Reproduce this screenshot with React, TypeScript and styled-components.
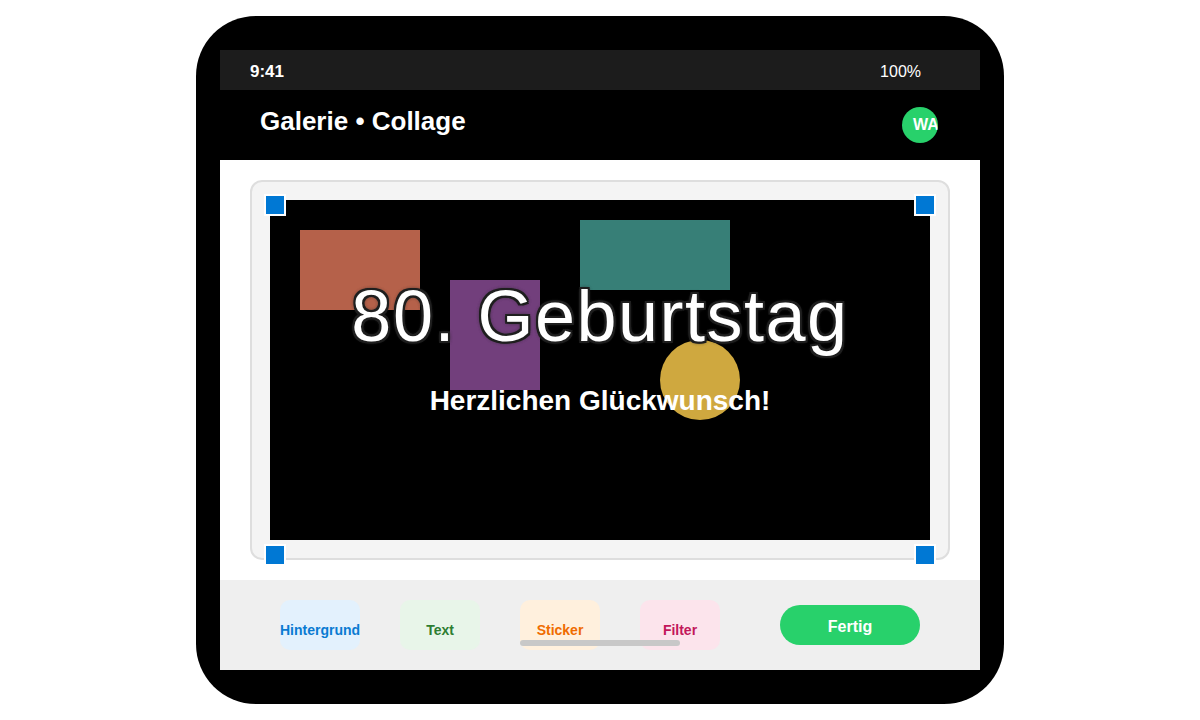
import styled, { createGlobalStyle } from "styled-components";

const GlobalStyle = createGlobalStyle`
  html, body {
    margin: 0;
    padding: 0;
    background: #ffffff;
    font-family: "Liberation Sans", Arial, sans-serif;
  }
`;

const Stage = styled.div`
  width: 1200px;
  height: 720px;
  display: flex;
  align-items: center;
  justify-content: center;
`;

const Phone = styled.div`
  box-sizing: border-box;
  width: 808px;
  height: 688px;
  padding: 34px 24px;
  background: #000;
  border-radius: 60px;
  display: flex;
`;

const Screen = styled.div`
  flex: 1;
  display: flex;
  flex-direction: column;
  overflow: hidden;
`;

const StatusBar = styled.div`
  box-sizing: border-box;
  height: 40px;
  flex-shrink: 0;
  background: #1c1c1c;
  color: #fff;
  display: flex;
  align-items: center;
  justify-content: space-between;
  padding: 4px 59px 0 30px;
`;

const Clock = styled.span`
  font-size: 17px;
  font-weight: 700;
`;

const Battery = styled.span`
  font-size: 16px;
`;

const Header = styled.div`
  height: 70px;
  flex-shrink: 0;
  background: #000;
  display: flex;
  align-items: center;
  justify-content: space-between;
  padding: 0 42px 0 40px;
`;

const Title = styled.h1`
  margin: 0 0 7px;
  color: #fff;
  font-size: 26px;
  font-weight: 700;
`;

const Avatar = styled.div`
  box-sizing: border-box;
  width: 36px;
  height: 36px;
  border-radius: 50%;
  background: #28d16b;
  color: #fff;
  font-size: 16px;
  font-weight: 700;
  display: flex;
  align-items: center;
  padding-left: 11px;
  overflow: hidden;
  white-space: nowrap;
`;

const Content = styled.div`
  flex: 1;
  background: #fff;
  padding: 20px 30px;
  display: flex;
`;

const Frame = styled.div`
  position: relative;
  flex: 1;
  background: #f4f4f4;
  border: 2px solid #dedede;
  border-radius: 12px;
  padding: 18px;
`;

const Canvas = styled.div`
  position: relative;
  height: 100%;
  background: #000;
  overflow: hidden;
`;

const Shape = styled.div<{ $x: number; $y: number; $w: number; $h: number; $color: string; $round?: boolean }>`
  position: absolute;
  left: ${(p) => p.$x}px;
  top: ${(p) => p.$y}px;
  width: ${(p) => p.$w}px;
  height: ${(p) => p.$h}px;
  background: ${(p) => p.$color};
  border-radius: ${(p) => (p.$round ? "50%" : "0")};
`;

const Headline = styled.div`
  position: absolute;
  left: 0;
  right: 0;
  top: 75px;
  text-align: center;
  color: #fff;
  font-size: 72px;
  letter-spacing: 1.5px;
  white-space: nowrap;
  text-shadow:
    2px 0 0 #1f1f1f, -2px 0 0 #1f1f1f, 0 2px 0 #1f1f1f, 0 -2px 0 #1f1f1f,
    2px 2px 0 #1f1f1f, -2px -2px 0 #1f1f1f, 2px -2px 0 #1f1f1f, -2px 2px 0 #1f1f1f,
    0 0 4px #2a2a2a, 0 0 4px #2a2a2a;
`;

const Subline = styled.div`
  position: absolute;
  left: 0;
  right: 0;
  top: 185px;
  text-align: center;
  color: #fff;
  font-size: 28px;
  font-weight: 700;
  white-space: nowrap;
`;

const Handle = styled.div<{ $top?: boolean; $left?: boolean }>`
  position: absolute;
  box-sizing: border-box;
  width: 22px;
  height: 22px;
  background: #0078d4;
  border: 2px solid #fff;
  ${(p) => (p.$top ? "top: 12px;" : "bottom: -8px;")}
  ${(p) => (p.$left ? "left: 12px;" : "right: 12px;")}
`;

const Toolbar = styled.div`
  position: relative;
  height: 90px;
  flex-shrink: 0;
  background: #efefef;
  display: flex;
  align-items: center;
  gap: 40px;
  padding: 0 60px;
`;

const ToolButton = styled.button<{ $bg: string; $fg: string }>`
  box-sizing: border-box;
  width: 80px;
  height: 50px;
  padding: 10px 0 0;
  border: none;
  border-radius: 10px;
  background: ${(p) => p.$bg};
  color: ${(p) => p.$fg};
  font-family: "Liberation Sans", Arial, sans-serif;
  font-size: 14px;
  font-weight: 700;
  display: flex;
  align-items: center;
  justify-content: center;
  white-space: nowrap;
`;

const DoneButton = styled.button`
  box-sizing: border-box;
  margin-left: auto;
  width: 140px;
  height: 40px;
  padding: 3px 0 0;
  border: none;
  border-radius: 20px;
  background: #28d16b;
  color: #fff;
  font-family: "Liberation Sans", Arial, sans-serif;
  font-size: 16px;
  font-weight: 700;
`;

const HomeIndicator = styled.div`
  position: absolute;
  left: 300px;
  bottom: 24px;
  width: 160px;
  height: 6px;
  border-radius: 3px;
  background: #c8c8c8;
`;

const tools = [
  { label: "Hintergrund", bg: "#e3f1fd", fg: "#0a7bd2" },
  { label: "Text", bg: "#e8f5e9", fg: "#2e7d32" },
  { label: "Sticker", bg: "#fff0dd", fg: "#ef6c00" },
  { label: "Filter", bg: "#fce4ec", fg: "#c2185b" },
];

export default function App() {
  return (
    <>
      <GlobalStyle />
      <Stage>
        <Phone>
          <Screen>
            <StatusBar>
              <Clock>9:41</Clock>
              <Battery>100%</Battery>
            </StatusBar>
            <Header>
              <Title>Galerie • Collage</Title>
              <Avatar>WA</Avatar>
            </Header>
            <Content>
              <Frame>
                <Canvas>
                  <Shape $x={30} $y={30} $w={120} $h={80} $color="#b5614a" />
                  <Shape $x={310} $y={20} $w={150} $h={70} $color="#377f77" />
                  <Shape $x={180} $y={80} $w={90} $h={110} $color="#723f7c" />
                  <Shape $x={390} $y={140} $w={80} $h={80} $color="#cfa83f" $round />
                  <Headline>80. Geburtstag</Headline>
                  <Subline>Herzlichen Glückwunsch!</Subline>
                </Canvas>
                <Handle $top $left />
                <Handle $top />
                <Handle $left />
                <Handle />
              </Frame>
            </Content>
            <Toolbar>
              {tools.map((t) => (
                <ToolButton key={t.label} $bg={t.bg} $fg={t.fg}>
                  {t.label}
                </ToolButton>
              ))}
              <DoneButton>Fertig</DoneButton>
              <HomeIndicator />
            </Toolbar>
          </Screen>
        </Phone>
      </Stage>
    </>
  );
}
